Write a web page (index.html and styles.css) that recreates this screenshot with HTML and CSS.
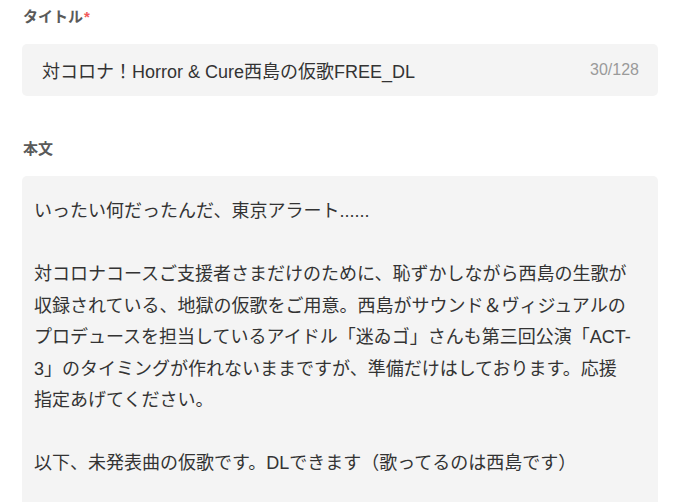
FILE: index.html
```html
<!DOCTYPE html>
<html lang="ja">
<head>
    <meta charset="UTF-8">
    <meta name="viewport" content="width=device-width, initial-scale=1.0">
    <title>投稿編集</title>
    <link rel="stylesheet" href="styles.css">
</head>
<body>

<div class="form">
    <div class="field">
        <label class="label">タイトル<span class="req">*</span></label>
        <div class="input">
            <span class="input-text">対コロナ！Horror &amp; Cure西島の仮歌FREE_DL</span>
            <span class="count">30/128</span>
        </div>
    </div>

    <div class="field">
        <label class="label">本文</label>
        <div class="textarea">
            <p>いったい何だったんだ、東京アラート......</p>
            <p>対コロナコースご支援者さまだけのために、恥ずかしながら西島の生歌が収録されている、地獄の仮歌をご用意。西島がサウンド＆ヴィジュアルのプロデュースを担当しているアイドル「迷ゐゴ」さんも第三回公演「ACT-3」のタイミングが作れないままですが、準備だけはしております。応援指定あげてください。</p>
            <p>以下、未発表曲の仮歌です。DLできます（歌ってるのは西島です）</p>
            <p>&nbsp;</p>
        </div>
    </div>
</div>

</body>
</html>
```

FILE: styles.css
```css
body {
    margin: 0;
    padding: 0;
    background: #fff;
    color: #333;
    font-family: "Liberation Sans", "Noto Sans CJK JP", sans-serif;
}
.form {
    padding: 6px 22px 0 22px;
}
.field {
    margin-bottom: 42px;
}
.label {
    display: block;
    font-size: 15px;
    font-weight: bold;
    color: #5a5a5a;
    line-height: 22px;
    margin-bottom: 16px;
    padding-left: 1px;
}
.req {
    color: #f25a5a;
    margin-left: 1px;
}
.input {
    display: flex;
    align-items: center;
    justify-content: space-between;
    height: 52px;
    padding: 0 19px 0 20px;
    background: #f4f4f4;
    border-radius: 5px;
}
.input-text {
    font-size: 18px;
    color: #333;
}
.count {
    font-size: 16px;
    color: #9a9a9a;
}
.textarea {
    background: #f4f4f4;
    border-radius: 5px;
    padding: 20px 25px 20px 12px;
    font-size: 18px;
    line-height: 31.5px;
}
.textarea p {
    margin: 0 0 31.5px;
}
```
